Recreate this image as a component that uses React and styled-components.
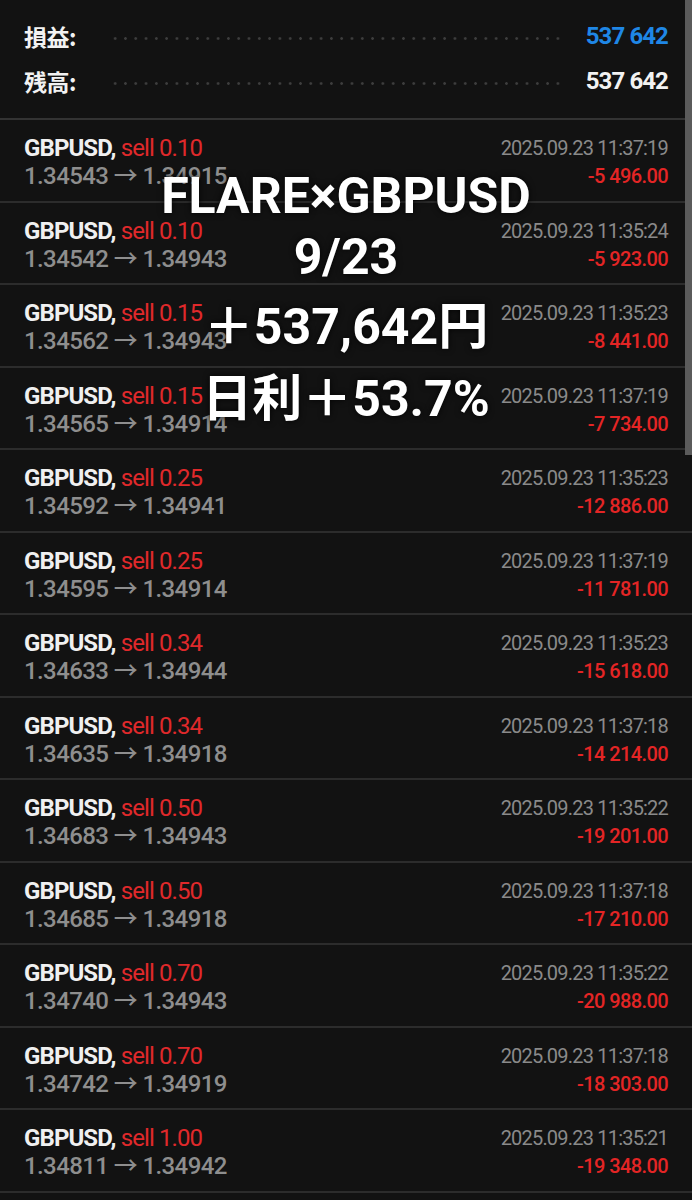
import styled, { createGlobalStyle } from "styled-components";

const GlobalStyle = createGlobalStyle`
  html, body {
    margin: 0;
    padding: 0;
    background: #121212;
  }
  body {
    font-family: Roboto, "Noto Sans CJK JP", sans-serif;
  }
`;

const Screen = styled.div`
  position: relative;
  width: 692px;
  height: 1200px;
  overflow: hidden;
  background: #121212;
`;

const Scrollbar = styled.div`
  position: absolute;
  top: 0;
  right: 0;
  width: 7px;
  height: 455px;
  background: #5b5b5b;
`;

const Summary = styled.div`
  display: flex;
  flex-direction: column;
  gap: 17px;
  padding: 22px 24px 23px;
  border-bottom: 2px solid #333;
`;

const SummaryRow = styled.div`
  display: flex;
  align-items: center;
  height: 28px;
`;

const SummaryLabel = styled.span`
  width: 86px;
  color: #f2f2f2;
  font-family: "Noto Sans CJK JP", sans-serif;
  font-weight: 700;
  font-size: 23px;
  letter-spacing: -0.5px;
`;

const Leader = styled.span`
  flex: 1;
  height: 3px;
  margin: 4px 22px 0 0;
  background-image: radial-gradient(circle, #3d3d3d 1.2px, transparent 1.5px);
  background-size: 10.3px 3px;
  background-repeat: repeat-x;
`;

const SummaryValue = styled.span`
  color: ${(p) => (p.$blue ? "#1f87e6" : "#f2f2f2")};
  font-weight: 700;
  font-size: 24px;
  letter-spacing: -0.9px;
`;

const List = styled.div`
  display: flex;
  flex-direction: column;
`;

const Deal = styled.div`
  display: flex;
  justify-content: space-between;
  align-items: flex-start;
  box-sizing: border-box;
  height: 82.5px;
  padding: 15px 24px 0;
  border-bottom: 2px solid #2c2c2c;
`;

const Col = styled.div`
  display: flex;
  flex-direction: column;
  align-items: ${(p) => (p.$right ? "flex-end" : "flex-start")};
  gap: 1px;
`;

const Line = styled.div`
  font-size: ${(p) => p.$size || 24}px;
  line-height: 27px;
  letter-spacing: ${(p) => p.$ls ?? -0.9}px;
  white-space: nowrap;
`;

const Symbol = styled.span`
  color: #f0f0f0;
  font-weight: 700;
`;

const Side = styled.span`
  color: #e0292b;
`;

const Prices = styled.span`
  color: #8e8e8e;
  font-weight: 500;
`;

const Time = styled.span`
  color: #8a8a8a;
`;

const Profit = styled.span`
  color: #e42525;
  font-weight: 500;
`;

const Overlay = styled.div`
  position: absolute;
  left: 0;
  right: 0;
  top: 171px;
  display: flex;
  flex-direction: column;
  align-items: center;
  color: #ffffff;
  font-family: Roboto, "Noto Sans CJK JP", sans-serif;
  font-weight: 700;
  font-size: 50px;
  line-height: 50px;
  text-shadow: 0 0 6px rgba(0, 0, 0, 0.85);
`;

const Caption = styled.div`
  margin-top: ${(p) => p.$gap || 0}px;
`;

const deals = [
  ["0.10", "1.34543", "1.34915", "11:37:19", "-5 496.00"],
  ["0.10", "1.34542", "1.34943", "11:35:24", "-5 923.00"],
  ["0.15", "1.34562", "1.34943", "11:35:23", "-8 441.00"],
  ["0.15", "1.34565", "1.34914", "11:37:19", "-7 734.00"],
  ["0.25", "1.34592", "1.34941", "11:35:23", "-12 886.00"],
  ["0.25", "1.34595", "1.34914", "11:37:19", "-11 781.00"],
  ["0.34", "1.34633", "1.34944", "11:35:23", "-15 618.00"],
  ["0.34", "1.34635", "1.34918", "11:37:18", "-14 214.00"],
  ["0.50", "1.34683", "1.34943", "11:35:22", "-19 201.00"],
  ["0.50", "1.34685", "1.34918", "11:37:18", "-17 210.00"],
  ["0.70", "1.34740", "1.34943", "11:35:22", "-20 988.00"],
  ["0.70", "1.34742", "1.34919", "11:37:18", "-18 303.00"],
  ["1.00", "1.34811", "1.34942", "11:35:21", "-19 348.00"],
];

export default function App() {
  return (
    <Screen>
      <GlobalStyle />
      <Summary>
        <SummaryRow>
          <SummaryLabel>損益:</SummaryLabel>
          <Leader />
          <SummaryValue $blue>537 642</SummaryValue>
        </SummaryRow>
        <SummaryRow>
          <SummaryLabel>残高:</SummaryLabel>
          <Leader />
          <SummaryValue>537 642</SummaryValue>
        </SummaryRow>
      </Summary>

      <List>
        {deals.map(([vol, open, close, time, profit], i) => (
          <Deal key={i}>
            <Col>
              <Line>
                <Symbol>GBPUSD,</Symbol> <Side>sell {vol}</Side>
              </Line>
              <Line $ls={-0.6}>
                <Prices>
                  {open} → {close}
                </Prices>
              </Line>
            </Col>
            <Col $right>
              <Line $size={20} $ls={-0.8}>
                <Time>2025.09.23 {time}</Time>
              </Line>
              <Line $size={20} $ls={-0.6}>
                <Profit>{profit}</Profit>
              </Line>
            </Col>
          </Deal>
        ))}
      </List>

      <Overlay>
        <Caption>FLARE×GBPUSD</Caption>
        <Caption $gap={11}>9/23</Caption>
        <Caption $gap={20}>＋537,642円</Caption>
        <Caption $gap={22}>日利＋53.7%</Caption>
      </Overlay>

      <Scrollbar />
    </Screen>
  );
}
